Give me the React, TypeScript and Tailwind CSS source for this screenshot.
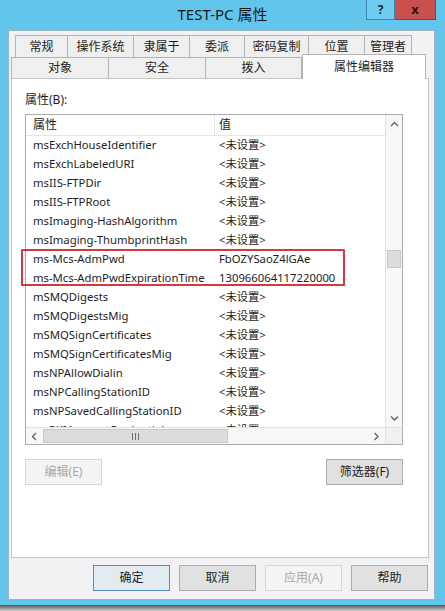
import React from "react";

const FONT = { fontFamily: '"Noto Sans", "Noto Sans CJK SC", sans-serif' };

const topTabs = [
  { label: "常规", w: "w-[53px]" },
  { label: "操作系统", w: "w-[67px]" },
  { label: "隶属于", w: "w-[57px]" },
  { label: "委派", w: "w-[56px]" },
  { label: "密码复制", w: "w-[65px]" },
  { label: "位置", w: "w-[57px]" },
  { label: "管理者", w: "w-[48px]" },
];

const lowerTabs = [
  { label: "对象", w: "w-[98px]" },
  { label: "安全", w: "w-[98px]" },
  { label: "拨入", w: "w-[97px]" },
];

const NOT_SET = "<未设置>";

const rows: [string, string][] = [
  ["msExchHouseIdentifier", NOT_SET],
  ["msExchLabeledURI", NOT_SET],
  ["msIIS-FTPDir", NOT_SET],
  ["msIIS-FTPRoot", NOT_SET],
  ["msImaging-HashAlgorithm", NOT_SET],
  ["msImaging-ThumbprintHash", NOT_SET],
  ["ms-Mcs-AdmPwd", "FbOZYSaoZ4lGAe"],
  ["ms-Mcs-AdmPwdExpirationTime", "130966064117220000"],
  ["mSMQDigests", NOT_SET],
  ["mSMQDigestsMig", NOT_SET],
  ["mSMQSignCertificates", NOT_SET],
  ["mSMQSignCertificatesMig", NOT_SET],
  ["msNPAllowDialin", NOT_SET],
  ["msNPCallingStationID", NOT_SET],
  ["msNPSavedCallingStationID", NOT_SET],
  ["msPKIAccountCredentials", NOT_SET],
];

// small scrollbar chevron, dir = up | down | left | right
function Arrow({ dir }: { dir: string }) {
  const pts: Record<string, string> = {
    up: "1,5 4.5,1.5 8,5",
    down: "1,1.5 4.5,5 8,1.5",
    left: "5,1 1.5,4.5 5,8",
    right: "1.5,1 5,4.5 1.5,8",
  };
  const vertical = dir === "up" || dir === "down";
  return (
    <svg
      width={vertical ? 9 : 7}
      height={vertical ? 7 : 9}
      viewBox={vertical ? "0 0 9 7" : "0 0 7 9"}
    >
      <polyline
        points={pts[dir]}
        fill="none"
        stroke="#606060"
        strokeWidth="1.3"
      />
    </svg>
  );
}

function Button({
  label,
  disabled,
  primary,
}: {
  label: string;
  disabled?: boolean;
  primary?: boolean;
}) {
  let cls = "bg-[#e1e1e1] border-[#adadad] text-[#1e1e1e]";
  if (disabled) cls = "bg-[#f4f4f4] border-[#d5d5d5] text-[#a8a8a8]";
  if (primary) cls = "bg-[#e3ebf2] border-[#4f8fc5] text-[#1e1e1e]";
  return (
    <div
      className={
        "w-[77px] h-[26px] border flex items-center justify-center text-[12px] " +
        cls
      }
    >
      {label}
    </div>
  );
}

export default function App() {
  return (
    <div className="w-[445px] h-[611px] bg-white overflow-hidden" style={FONT}>
      <div className="h-[605px] bg-[#62c5ec] flex flex-col">
        {/* title bar */}
        <div className="h-[30px] flex items-start">
          <div className="w-[79px]" />
          <div className="flex-1 text-center text-[15px] leading-[28px] text-[#1b1b1b]">
            TEST-PC 属性
          </div>
          <div className="w-[79px] pr-[9px] flex">
            <div className="w-[29px] h-[20px] border border-t-0 border-[#3f86ae] bg-[#6fcbef] flex items-center justify-center text-[12px] font-bold text-[#1b2b3b]">
              ?
            </div>
            <div className="w-[41px] h-[20px] border border-t-0 border-l-0 border-[#8d3a36] bg-[#c9504c] flex items-center justify-center text-[13px] font-bold text-[#2a1212] leading-none">
              x
            </div>
          </div>
        </div>

        {/* client area */}
        <div className="ml-[8px] mr-[10px] h-[570px] bg-[#f2f1f3] border border-[#9db4c4] flex flex-col">
          <div className="pt-[4px] px-[2px]">
            {/* first tab row */}
            <div className="flex ml-[4px] h-[22px]">
              {topTabs.map((t) => (
                <div
                  key={t.label}
                  className={
                    t.w +
                    " h-[22px] border border-b-0 border-[#b4b4b4] -ml-px first:ml-0 bg-[#efefef] flex items-center justify-center text-[12px] text-[#1e1e1e]"
                  }
                >
                  {t.label}
                </div>
              ))}
            </div>
            {/* second tab row */}
            <div className="flex h-[21px] items-end">
              {lowerTabs.map((t) => (
                <div
                  key={t.label}
                  className={
                    t.w +
                    " h-[21px] border border-b-0 border-[#b4b4b4] -ml-px first:ml-0 bg-[#efefef] flex items-center justify-center text-[12px] text-[#1e1e1e]"
                  }
                >
                  {t.label}
                </div>
              ))}
              <div className="w-[124px] h-[25px] -mb-px relative z-10 border border-b-0 border-[#b4b4b4] bg-white flex items-start justify-center pt-[3px] text-[12px] text-[#1e1e1e]">
                属性编辑器
              </div>
            </div>

            {/* panel */}
            <div className="h-[480px] w-[418px] border border-[#c4c4c4] bg-white pl-[13px] pt-[13px] flex flex-col">
              <div className="text-[12px] leading-[16px] text-[#1e1e1e] h-[22px]">
                属性(B):
              </div>

              {/* list view */}
              <div className="relative w-[378px] h-[331px] border border-[#acacac] flex flex-col">
                <div className="flex flex-1 min-h-0">
                  <div className="flex-1 flex flex-col min-w-0 overflow-hidden">
                    <div className="h-[21px] flex border-b border-[#e5e5e5] text-[12px] text-[#1e1e1e] shrink-0">
                      <div className="w-[189px] pl-[7px] border-r border-[#e5e5e5] flex items-center">
                        属性
                      </div>
                      <div className="pl-[4px] flex items-center">值</div>
                    </div>
                    <div className="flex-1 overflow-hidden">
                      {rows.map(([name, value]) => (
                        <div
                          key={name}
                          className="h-[19px] flex items-center text-[11.3px] text-[#1e1e1e] whitespace-nowrap"
                        >
                          <div className="w-[193px] pl-[7px]">{name}</div>
                          <div>{value}</div>
                        </div>
                      ))}
                    </div>
                  </div>
                  {/* vertical scrollbar */}
                  <div className="w-[17px] bg-[#f7f7f7] border-l border-[#e2e2e2] flex flex-col">
                    <div className="h-[18px] flex items-center justify-center">
                      <Arrow dir="up" />
                    </div>
                    <div className="flex-1 pt-[117px]">
                      <div className="mx-[1px] h-[18px] bg-[#dcdcdc] border border-[#c8c8c8]" />
                    </div>
                    <div className="h-[17px] flex items-center justify-center">
                      <Arrow dir="down" />
                    </div>
                  </div>
                </div>
                {/* horizontal scrollbar */}
                <div className="h-[17px] flex shrink-0">
                  <div className="flex-1 flex bg-[#f7f7f7] border-t border-[#e2e2e2]">
                    <div className="w-[17px] flex items-center justify-center">
                      <Arrow dir="left" />
                    </div>
                    <div className="flex-1 flex items-stretch py-[1px]">
                      <div className="w-[185px] bg-[#dcdcdc] border border-[#c8c8c8] flex items-center justify-center">
                        <div className="flex gap-[2px]">
                          <div className="w-px h-[7px] bg-[#707070]" />
                          <div className="w-px h-[7px] bg-[#707070]" />
                          <div className="w-px h-[7px] bg-[#707070]" />
                        </div>
                      </div>
                    </div>
                    <div className="w-[17px] flex items-center justify-center">
                      <Arrow dir="right" />
                    </div>
                  </div>
                  <div className="w-[17px] bg-[#f0f0f0] border-t border-l border-[#e2e2e2]" />
                </div>

                {/* highlight annotation */}
                <div className="absolute left-[-5px] top-[134px] w-[324px] h-[37px] border-2 border-[#d6393d] rounded-[1px] pointer-events-none" />
              </div>

              <div className="mt-[14px] flex justify-between w-[378px]">
                <Button label="编辑(E)" disabled />
                <Button label="筛选器(F)" />
              </div>
            </div>
          </div>

          {/* dialog buttons */}
          <div className="mt-[7px] flex justify-end gap-[9px] pr-[6px]">
            <Button label="确定" primary />
            <Button label="取消" />
            <Button label="应用(A)" disabled />
            <Button label="帮助" />
          </div>
        </div>
      </div>
      <div className="h-[6px] bg-gradient-to-b from-[#555] to-[#d0d0d0]" />
    </div>
  );
}
